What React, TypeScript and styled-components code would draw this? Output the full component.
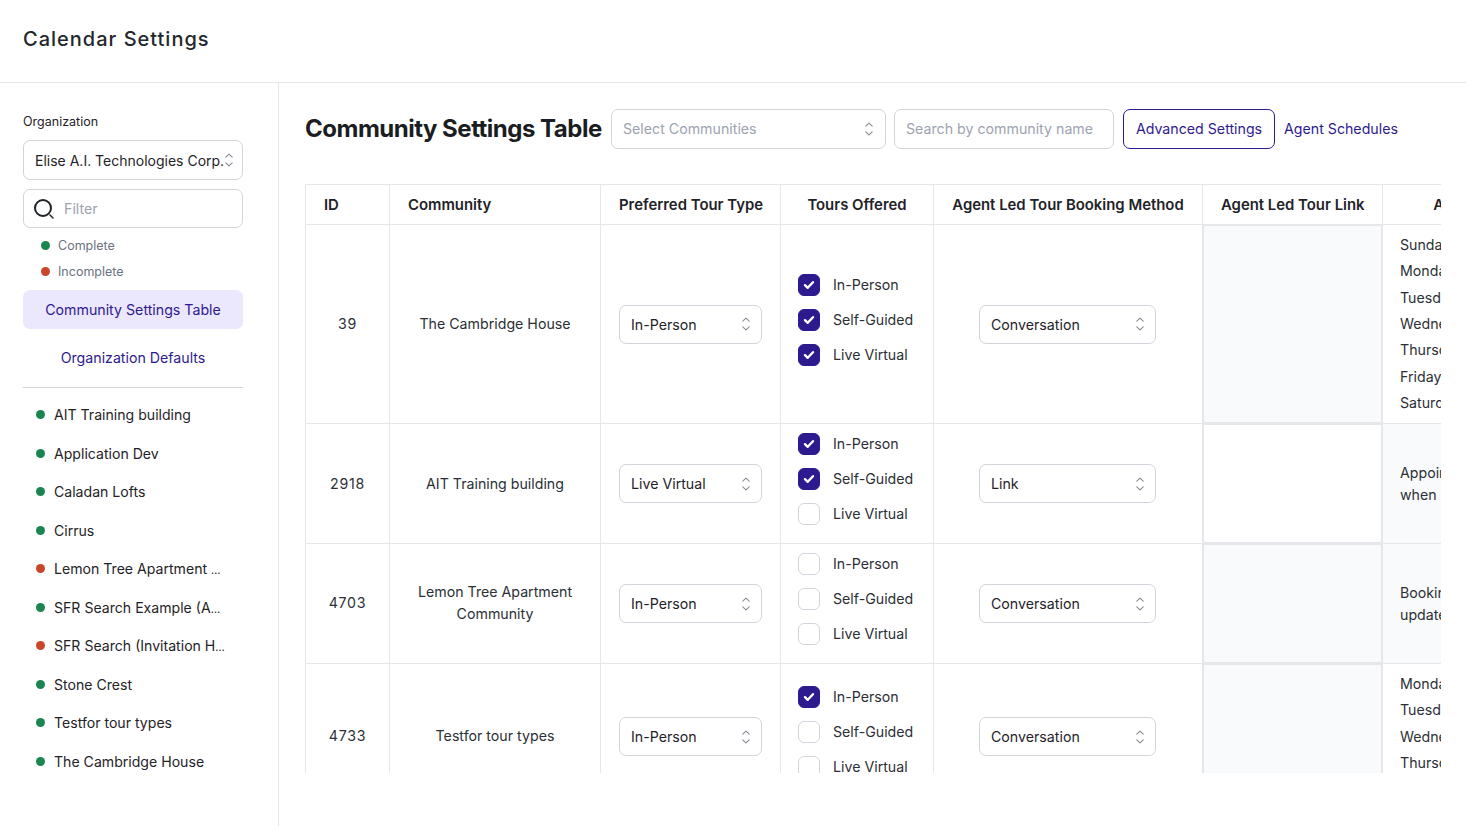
import React from "react";
import styled, { createGlobalStyle } from "styled-components";

const Global = createGlobalStyle`
  html, body { margin: 0; padding: 0; height: 100%; overflow: hidden; background: #fff; }
  body { font-family: Inter, "Liberation Sans", sans-serif; color: #1f2328; font-size: 14.2px; }
  * { box-sizing: border-box; }
`;

const PURPLE = "#2e1a8f";

const Page = styled.div`
  width: 1466px;
  height: 826px;
  display: flex;
  flex-direction: column;
`;
const Header = styled.header`
  height: 83px;
  flex: none;
  border-bottom: 1px solid #e5e7eb;
  padding: 0 23px;
  display: flex;
  align-items: center;
  padding-bottom: 5px;
`;
const PageTitle = styled.h1`
  margin: 0;
  font: 500 20px/28px Inter, sans-serif;
  letter-spacing: 1px;
  color: #24272b;
`;
const Body = styled.div`
  flex: 1;
  display: flex;
  min-height: 0;
`;
const Sidebar = styled.aside`
  width: 279px;
  flex: none;
  border-right: 1px solid #e5e7eb;
  padding: 30px 35px 0 23px;
  display: flex;
  flex-direction: column;
`;
const FieldLabel = styled.div`
  font-size: 12.5px;
  line-height: 17px;
  color: #1f2328;
  margin-bottom: 10px;
`;
const Chevrons = styled.svg`
  width: 10px;
  height: 14px;
  flex: none;
  color: #858b96;
`;
const Updown = () => (
  <Chevrons viewBox="0 0 10 14" fill="none" stroke="currentColor" strokeWidth="1.1" strokeLinecap="round" strokeLinejoin="round">
    <path d="M1.8 4.2 L5 1.2 L8.2 4.2" />
    <path d="M1.8 9.8 L5 12.8 L8.2 9.8" />
  </Chevrons>
);
const SelectBox = styled.div<{ $w?: number; $h?: number; $muted?: boolean }>`
  width: ${(p) => (p.$w ? `${p.$w}px` : "100%")};
  height: ${(p) => p.$h ?? 39}px;
  flex: none;
  border: 1px solid #d1d5db;
  border-radius: 7px;
  background: #fff;
  display: flex;
  align-items: center;
  justify-content: space-between;
  padding: 0 11px;
  font-size: 14.2px;
  color: ${(p) => (p.$muted ? "#9ca3af" : "#1f2328")};
  white-space: nowrap;
  overflow: hidden;
`;
const OrgSelect = styled(SelectBox)`
  margin-bottom: 9px;
  font-size: 14px;
`;
const ToolbarSelect = styled(SelectBox)`
  padding-bottom: 1px;
`;
const CellSelect = styled(SelectBox)`
  margin: 0 auto;
  padding-right: 10px;
`;
const SelectText = styled.span`
  padding-top: 1px;
`;
const FilterBox = styled.div`
  height: 39px;
  border: 1px solid #d1d5db;
  border-radius: 7px;
  display: flex;
  align-items: center;
  gap: 9px;
  padding: 0 9px;
  color: #9ca3af;
  font-size: 14.2px;
`;
const Legend = styled.div`
  display: flex;
  flex-direction: column;
  gap: 9px;
  padding: 9px 0 10px 18px;
`;
const LegendItem = styled.div`
  display: flex;
  align-items: center;
  gap: 8px;
  font-size: 12.5px;
  line-height: 17px;
  color: #6b7280;
`;
const Dot = styled.span<{ $bad?: boolean }>`
  width: 9px;
  height: 9px;
  border-radius: 50%;
  flex: none;
  background: ${(p) => (p.$bad ? "#c8472a" : "#1a8550")};
`;
const NavItem = styled.div<{ $active?: boolean }>`
  height: 39px;
  flex: none;
  margin-top: ${(p) => (p.$active ? 0 : 9)}px;
  border-radius: 7px;
  background: ${(p) => (p.$active ? "#ebe7fd" : "transparent")};
  color: ${PURPLE};
  display: flex;
  align-items: center;
  justify-content: center;
  font-size: 14.2px;
`;
const Rule = styled.hr`
  border: 0;
  border-top: 1px solid #d1d5db;
  margin: 10px 0 7.5px;
  width: 100%;
`;
const CommunityList = styled.ul`
  list-style: none;
  margin: 0;
  padding: 0 0 0 13px;
  display: flex;
  flex-direction: column;
`;
const CommunityItem = styled.li`
  height: 38.5px;
  display: flex;
  align-items: center;
  gap: 9px;
  font-size: 14.1px;
  white-space: pre;
`;
const Ellipsis = styled.span`
  font-size: 11px;
`;
const Main = styled.main`
  flex: 1;
  min-width: 0;
  padding: 26px 25px 0 26px;
  display: flex;
  flex-direction: column;
`;
const Toolbar = styled.div`
  display: flex;
  align-items: center;
  height: 40px;
  margin-bottom: 35px;
`;
const SectionTitle = styled.h2`
  margin: 0 10px 0 0;
  width: 296px;
  font: 700 24px/32px Inter, sans-serif;
  letter-spacing: -0.5px;
  color: #1a1d21;
  white-space: nowrap;
`;
const SearchBox = styled(ToolbarSelect)`
  margin-left: 8px;
`;
const OutlineButton = styled.div`
  margin-left: 9px;
  width: 152px;
  height: 40px;
  padding-bottom: 1px;
  border: 1px solid ${PURPLE};
  border-radius: 7px;
  color: ${PURPLE};
  display: flex;
  align-items: center;
  justify-content: center;
  font-size: 14.2px;
`;
const TextLink = styled.div`
  margin-left: 9px;
  padding-bottom: 1px;
  color: ${PURPLE};
  font-size: 14.2px;
`;
const TableClip = styled.div`
  width: 1136px;
  height: 589px;
  overflow: hidden;
`;
const Table = styled.table`
  table-layout: fixed;
  border-collapse: collapse;
  width: 1371px;
`;
const Th = styled.th<{ $w: number; $left?: boolean }>`
  width: ${(p) => p.$w}px;
  height: 40px;
  border: 1px solid #e5e7eb;
  padding: 0 18px;
  font-size: 14.9px;
  font-weight: 600;
  color: #1f2328;
  white-space: nowrap;
  text-align: ${(p) => (p.$left ? "left" : "center")};
`;
const Row = styled.tr<{ $h: number }>`
  height: ${(p) => p.$h}px;
`;
const Td = styled.td`
  border: 1px solid #e5e7eb;
  padding: 0 18px;
  text-align: center;
  font-size: 14.2px;
  line-height: 22px;
  color: #2b2f36;
`;
const TextCell = styled(Td)<{ $lift: number }>`
  padding-bottom: ${(p) => p.$lift}px;
`;
const IdCell = styled(TextCell)`
  letter-spacing: 0.7px;
`;
const MethodCell = styled(Td)`
  padding: 0 47px 0 45px;
`;
const CheckCell = styled(Td)`
  text-align: left;
  padding-left: 17px;
`;
const LinkCell = styled.td<{ $gray: boolean }>`
  border: 1px solid #e5e7eb;
  padding: 0;
  background: ${(p) => (p.$gray ? "#f9fafb" : "#fff")};
  box-shadow: inset 0 0 0 1px #e5e7eb;
`;
const NotesCell = styled(Td)<{ $gray: boolean }>`
  text-align: left;
  padding-left: 17px;
  white-space: nowrap;
  background: ${(p) => (p.$gray ? "#f9fafb" : "#fff")};
`;
const DayList = styled.div`
  padding-top: 0.5px;
`;
const DayLine = styled.div`
  line-height: 26.35px;
`;
const NoteLine = styled.div`
  line-height: 22px;
  color: #2b2f36;
`;
const CheckList = styled.div`
  display: flex;
  flex-direction: column;
  gap: 13px;
  padding-bottom: 9px;
`;
const CheckRow = styled.div`
  display: flex;
  align-items: center;
  gap: 13px;
  height: 22px;
  white-space: nowrap;
`;
const Box = styled.span<{ $on: boolean }>`
  width: 22px;
  height: 22px;
  flex: none;
  border-radius: 6px;
  border: 1px solid ${(p) => (p.$on ? PURPLE : "#d1d5db")};
  background: ${(p) => (p.$on ? PURPLE : "#fff")};
  display: flex;
  align-items: center;
  justify-content: center;
`;

const SearchIcon = () => (
  <svg width="22" height="22" viewBox="0 0 22 22" fill="none" stroke="#1f2328" strokeWidth="2" strokeLinecap="round">
    <circle cx="10" cy="10" r="8" />
    <path d="M17 17 L20 20" strokeWidth="1.4" />
  </svg>
);
const Tick = () => (
  <svg width="12" height="10" viewBox="0 0 12 10" fill="none" stroke="#fff" strokeWidth="2.4" strokeLinecap="round" strokeLinejoin="round">
    <path d="M2 5.2 L4.7 7.8 L10 2.2" />
  </svg>
);

const Checks = ({ v }: { v: boolean[] }) => (
  <CheckList>
    {["In-Person", "Self-Guided", "Live Virtual"].map((t, i) => (
      <CheckRow key={t}>
        <Box $on={v[i]}>{v[i] && <Tick />}</Box>
        {t}
      </CheckRow>
    ))}
  </CheckList>
);

const communities: { name: string; bad?: boolean; cut?: boolean }[] = [
  { name: "AIT Training building" },
  { name: "Application Dev" },
  { name: "Caladan Lofts" },
  { name: "Cirrus" },
  { name: "Lemon Tree Apartment ", bad: true, cut: true },
  { name: "SFR Search Example (A", cut: true },
  { name: "SFR Search (Invitation H", bad: true, cut: true },
  { name: "Stone Crest" },
  { name: "Testfor tour types" },
  { name: "The Cambridge House" },
];

const rows = [
  { h: 199, lift: 0.5, id: "39", name: "The Cambridge House", type: "In-Person", checks: [true, true, true], method: "Conversation", linkGray: true, noteGray: false, days: ["Sunday", "Monday", "Tuesday", "Wednesday", "Thursday", "Friday", "Saturday"] },
  { h: 120, lift: 0, id: "2918", name: "AIT Training building", type: "Live Virtual", checks: [true, true, false], method: "Link", linkGray: false, noteGray: true, notes: ["Appointments", "when"] },
  { h: 120, lift: 0.5, id: "4703", name: "Lemon Tree Apartment Community", type: "In-Person", checks: [false, false, false], method: "Conversation", linkGray: true, noteGray: true, notes: ["Booking", "updates"] },
  { h: 146, lift: 0.5, id: "4733", name: "Testfor tour types", type: "In-Person", checks: [true, false, false], method: "Conversation", linkGray: true, noteGray: false, days: ["Monday", "Tuesday", "Wednesday", "Thursday", "Friday"] },
];

export default function App() {
  return (
    <Page>
      <Global />
      <Header>
        <PageTitle>Calendar Settings</PageTitle>
      </Header>
      <Body>
        <Sidebar>
          <FieldLabel>Organization</FieldLabel>
          <OrgSelect $h={40}>
            Elise A.I. Technologies Corp.
            <Updown />
          </OrgSelect>
          <FilterBox>
            <SearchIcon />
            Filter
          </FilterBox>
          <Legend>
            <LegendItem><Dot />Complete</LegendItem>
            <LegendItem><Dot $bad />Incomplete</LegendItem>
          </Legend>
          <NavItem $active>Community Settings Table</NavItem>
          <NavItem>Organization Defaults</NavItem>
          <Rule />
          <CommunityList>
            {communities.map((c) => (
              <CommunityItem key={c.name}>
                <Dot $bad={c.bad} />
                <span>
                  {c.name}
                  {c.cut && <Ellipsis>…</Ellipsis>}
                </span>
              </CommunityItem>
            ))}
          </CommunityList>
        </Sidebar>
        <Main>
          <Toolbar>
            <SectionTitle>Community Settings Table</SectionTitle>
            <ToolbarSelect $w={275} $h={40} $muted>
              Select Communities
              <Updown />
            </ToolbarSelect>
            <SearchBox $w={220} $h={40} $muted>Search by community name</SearchBox>
            <OutlineButton>Advanced Settings</OutlineButton>
            <TextLink>Agent Schedules</TextLink>
          </Toolbar>
          <TableClip>
            <Table>
              <thead>
                <tr>
                  <Th $w={84} $left>ID</Th>
                  <Th $w={211} $left>Community</Th>
                  <Th $w={180} $left>Preferred Tour Type</Th>
                  <Th $w={153}>Tours Offered</Th>
                  <Th $w={269}>Agent Led Tour Booking Method</Th>
                  <Th $w={180}>Agent Led Tour Link</Th>
                  <Th $w={294}>Agent Led Tour Availability</Th>
                </tr>
              </thead>
              <tbody>
                {rows.map((r) => (
                  <Row key={r.id} $h={r.h}>
                    <IdCell $lift={r.lift}>{r.id}</IdCell>
                    <TextCell $lift={r.lift}>{r.name}</TextCell>
                    <Td>
                      <CellSelect $w={143}>
                        <SelectText>{r.type}</SelectText>
                        <Updown />
                      </CellSelect>
                    </Td>
                    <CheckCell><Checks v={r.checks} /></CheckCell>
                    <MethodCell>
                      <CellSelect $w={177}>
                        <SelectText>{r.method}</SelectText>
                        <Updown />
                      </CellSelect>
                    </MethodCell>
                    <LinkCell $gray={r.linkGray} />
                    <NotesCell $gray={r.noteGray}>
                      {r.days ? (
                        <DayList>{r.days.map((d) => <DayLine key={d}>{d}</DayLine>)}</DayList>
                      ) : (
                        r.notes!.map((n) => <NoteLine key={n}>{n}</NoteLine>)
                      )}
                    </NotesCell>
                  </Row>
                ))}
              </tbody>
            </Table>
          </TableClip>
        </Main>
      </Body>
    </Page>
  );
}
